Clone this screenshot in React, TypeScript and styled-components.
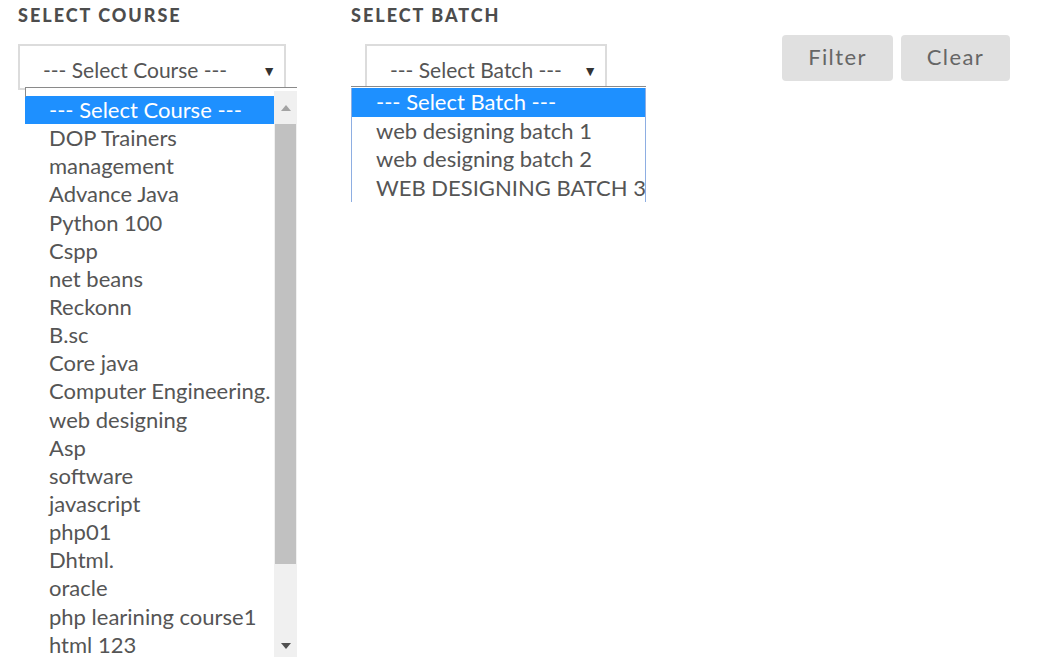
import React from "react";
import styled, { createGlobalStyle } from "styled-components";

const GlobalStyle = createGlobalStyle`
  html, body { margin: 0; padding: 0; background: #fff; }
  body { font-family: Lato, "Open Sans", sans-serif; color: #555; overflow: hidden; }
`;

const Page = styled.div`
  display: flex;
  align-items: flex-start;
  padding: 5px 0 0 18px;
  height: 652px;
  overflow: hidden;
`;

const Field = styled.div<{ $width: number; $ml?: number }>`
  display: flex;
  flex-direction: column;
  width: ${(p) => p.$width}px;
  margin-left: ${(p) => p.$ml ?? 0}px;
`;

const Label = styled.div`
  font-weight: 900;
  font-size: 18px;
  letter-spacing: 2px;
  color: #4d4d4d;
  line-height: 20px;
  white-space: nowrap;
`;

const SelectWrap = styled.div<{ $indent: number; $width: number }>`
  position: relative;
  margin-top: 19px;
  margin-left: ${(p) => p.$indent}px;
  width: ${(p) => p.$width}px;
`;

const SelectBox = styled.div`
  box-sizing: border-box;
  height: 46px;
  border: 2px solid #dcdcdc;
  background: #fff;
  display: flex;
  align-items: center;
  justify-content: flex-start;
  font-size: 21px;
  color: #555;
  position: relative;
  padding: 5px 0 0 23px;
  white-space: nowrap;
`;

const Arrow = styled.span`
  position: absolute;
  right: 8px;
  top: 50%;
  transform: translateY(-30%);
  font-size: 14px;
  color: #333;
`;

const CourseList = styled.div`
  position: absolute;
  top: 43px;
  left: 7px;
  width: 272px;
  height: 580px;
  display: flex;
  background: #fff;
  border-top: 1px solid #8a8a8a;
  &::before {
    content: "";
    position: absolute;
    left: 0;
    top: 0;
    width: 1px;
    height: 9px;
    background: #8a8a8a;
  }
`;

const Options = styled.div<{ $pt: number }>`
  flex: 1;
  padding-top: ${(p) => p.$pt}px;
  display: flex;
  flex-direction: column;
  overflow: hidden;
`;

const Option = styled.div<{ $selected?: boolean; $pl: number; $h: number }>`
  flex-shrink: 0;
  height: ${(p) => p.$h}px;
  line-height: ${(p) => p.$h}px;
  padding-left: ${(p) => p.$pl}px;
  font-size: 22px;
  white-space: nowrap;
  overflow: hidden;
  background: ${(p) => (p.$selected ? "#1e90ff" : "transparent")};
  color: ${(p) => (p.$selected ? "#fff" : "#555")};
`;

const Scrollbar = styled.div`
  width: 23px;
  margin-top: 3px;
  background: #f0f0f0;
  display: flex;
  flex-direction: column;
  align-items: center;
  position: relative;
`;

const ScrollArrow = styled.div<{ $down?: boolean }>`
  height: 33px;
  display: flex;
  align-items: center;
  justify-content: center;
  width: 100%;
  ${(p) => (p.$down ? "position: absolute; top: 538px;" : "")}
`;

const Thumb = styled.div`
  width: 21px;
  height: 440px;
  background: #c1c1c1;
`;

const BatchList = styled.div`
  position: absolute;
  top: 42px;
  left: -14px;
  width: 295px;
  height: 116px;
  overflow: hidden;
  background: #fff;
  border-top: 1px solid #8a8a8a;
  box-sizing: border-box;
  &::after {
    content: "";
    position: absolute;
    inset: 1px 0 0 0;
    border-left: 1px solid #8eaee2;
    border-right: 1px solid #8eaee2;
    pointer-events: none;
  }
`;

const Buttons = styled.div`
  display: flex;
  gap: 8px;
  margin-left: 136px;
  margin-top: 30px;
`;

const Button = styled.button<{ $width: number }>`
  width: ${(p) => p.$width}px;
  height: 46px;
  border: none;
  border-radius: 4px;
  background: #e0e0e0;
  color: #666;
  font-family: Lato, "Open Sans", sans-serif;
  font-size: 22px;
  letter-spacing: 1.4px;
  padding: 0 0 4px;
`;

const Tri = ({ down }: { down?: boolean }) => (
  <svg width="10" height="6" viewBox="0 0 10 6">
    <path d={down ? "M0 0 L10 0 L5 6 Z" : "M0 6 L10 6 L5 0 Z"} fill={down ? "#505050" : "#a3a3a3"} />
  </svg>
);

const courses = [
  "--- Select Course ---",
  "DOP Trainers",
  "management",
  "Advance Java",
  "Python 100",
  "Cspp",
  "net beans",
  "Reckonn",
  "B.sc",
  "Core java",
  "Computer Engineering.",
  "web designing",
  "Asp",
  "software",
  "javascript",
  "php01",
  "Dhtml.",
  "oracle",
  "php learining course1",
  "html 123",
];

const batches = [
  "--- Select Batch ---",
  "web designing batch 1",
  "web designing batch 2",
  "WEB DESIGNING BATCH 3",
];

export default function App() {
  return (
    <>
      <GlobalStyle />
      <Page>
        <Field $width={268}>
          <Label>SELECT COURSE</Label>
          <SelectWrap $indent={0} $width={268}>
            <SelectBox>
              --- Select Course ---
              <Arrow>▼</Arrow>
            </SelectBox>
            <CourseList>
              <Options $pt={8}>
                {courses.map((c, i) => (
                  <Option key={c} $selected={i === 0} $pl={24} $h={28.15}>
                    {c}
                  </Option>
                ))}
              </Options>
              <Scrollbar>
                <ScrollArrow>
                  <Tri />
                </ScrollArrow>
                <Thumb />
                <ScrollArrow $down>
                  <Tri down />
                </ScrollArrow>
              </Scrollbar>
            </CourseList>
          </SelectWrap>
        </Field>
        <Field $width={295} $ml={65}>
          <Label>SELECT BATCH</Label>
          <SelectWrap $indent={14} $width={242}>
            <SelectBox>
              --- Select Batch ---
              <Arrow>▼</Arrow>
            </SelectBox>
            <BatchList>
              <Options $pt={1}>
                {batches.map((b, i) => (
                  <Option key={b} $selected={i === 0} $pl={25} $h={28.5}>
                    {b}
                  </Option>
                ))}
              </Options>
            </BatchList>
          </SelectWrap>
        </Field>
        <Buttons>
          <Button $width={111}>Filter</Button>
          <Button $width={109}>Clear</Button>
        </Buttons>
      </Page>
    </>
  );
}
